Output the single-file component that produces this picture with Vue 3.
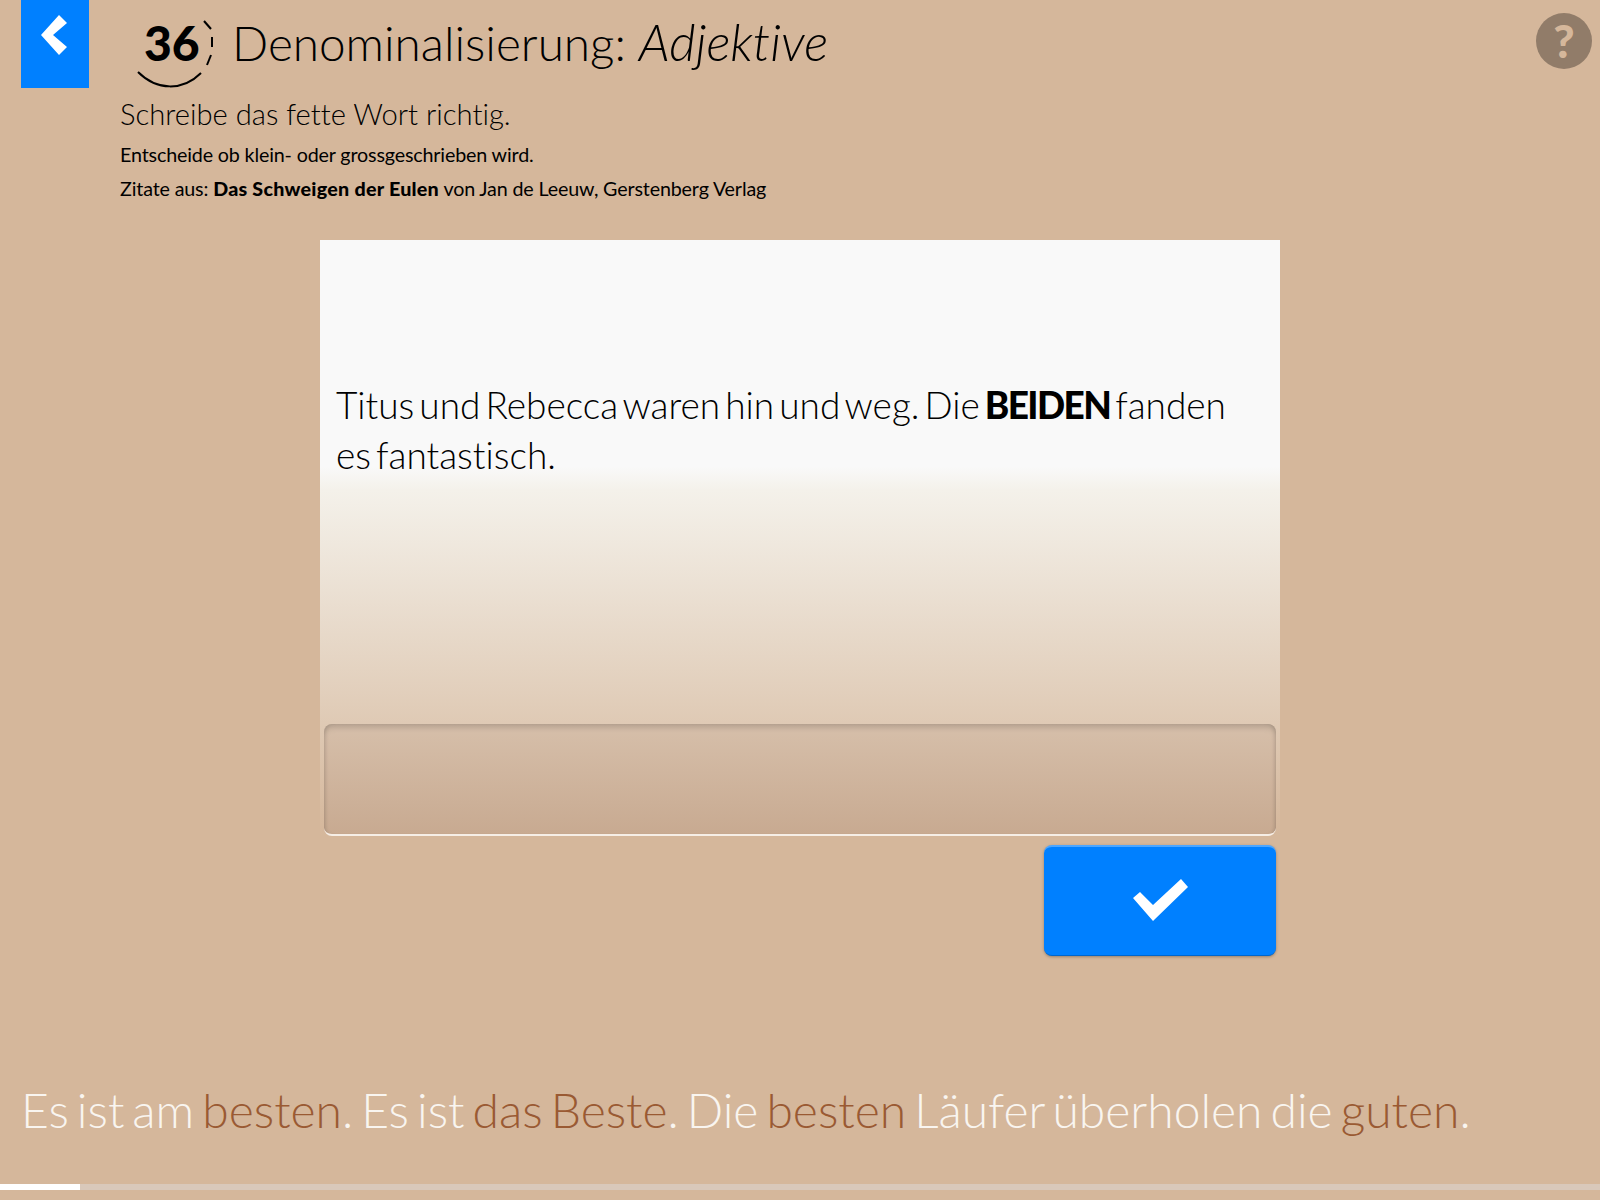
<template>
  <div class="page">
    <header class="top">
      <a class="back">
        <svg width="68" height="88" viewBox="0 0 68 88"><polygon points="38,15 46,23 32,35 46,47 38,55 20,35" fill="#fff"/></svg>
      </a>
      <div class="number">
        <svg class="ring" width="84" height="74" viewBox="0 0 84 74">
          <path d="M67 2 L74 10" fill="none" stroke="#000" stroke-width="2"/>
          <path d="M75 18 L75 28" fill="none" stroke="#000" stroke-width="2"/>
          <path d="M74 36 L70 46" fill="none" stroke="#000" stroke-width="2"/>
          <path d="M1 53 C20 72 46 72 64 54" fill="none" stroke="#000" stroke-width="2"/>
        </svg>
        <span>36</span>
      </div>
      <h1>Denominalisierung: <em>Adjektive</em></h1>
      <div class="help">?</div>
    </header>

    <div class="intro">
      <p class="lead">Schreibe das fette Wort richtig.</p>
      <p class="small">Entscheide ob klein- oder grossgeschrieben wird.</p>
      <p class="small">Zitate aus: <b>Das Schweigen der Eulen</b> von Jan de Leeuw, Gerstenberg Verlag</p>
    </div>

    <main class="exercise">
      <div class="card">
        <p class="sentence">Titus und Rebecca waren hin und weg. Die <b>BEIDEN</b> fanden<br>es fantastisch.</p>
        <div class="answer"></div>
      </div>
      <button class="check">
        <svg width="55" height="42" viewBox="0 0 55 42"><polygon points="0,19 7,13 20,26 48,0 55,8 20,42" fill="#fff"/></svg>
      </button>
    </main>

    <p class="rule">Es ist am <span>besten</span>. Es ist <span>das Beste</span>. Die <span>besten</span> Läufer überholen die <span>guten</span>.</p>

    <div class="progress"><div class="bar" :style="{ width: progress + 'px' }"></div></div>
  </div>
</template>

<script setup>
const progress = 80
</script>

<style>
html, body { margin: 0; background: #d5b79b; }
</style>

<style scoped>
.page {
  width: 1600px;
  height: 1200px;
  display: flex;
  flex-direction: column;
  background: #d5b79b;
  color: #000;
  font-family: Lato, "Noto Sans", sans-serif;
  font-weight: 300;
  font-variant-ligatures: none;
  overflow: hidden;
}

.top {
  display: flex;
  align-items: flex-start;
  height: 88px;
  padding-left: 21px;
  flex-shrink: 0;
}

.back {
  width: 68px;
  height: 88px;
  background: #0080ff;
}
.back svg { display: block; }

.number {
  position: relative;
  width: 96px;
  height: 88px;
  margin-left: 48px;
  flex-shrink: 0;
}
.number span {
  position: absolute;
  left: 7px;
  top: 10px;
  font-size: 48px;
  line-height: 66px;
  font-weight: 900;
}
.ring {
  position: absolute;
  left: 0;
  top: 19px;
}

h1 {
  margin: 9px 0 0 -1px;
  font-size: 47.7px;
  line-height: 66px;
  font-weight: 300;
  flex: 1;
}
h1 em { font-size: 51px; }

.help {
  width: 56px;
  height: 56px;
  margin: 13px 8px 0 0;
  border-radius: 50%;
  background: #917c69;
  color: #d5b79b;
  font-size: 46px;
  line-height: 56px;
  font-weight: 900;
  text-align: center;
}

.intro { padding: 8px 0 0 120px; height: 152px; box-sizing: border-box; }
.intro p { margin: 0; }
.lead { font-size: 29.2px; line-height: 36px; margin-bottom: 6px !important; }
.small { font-size: 19.7px; line-height: 34px; font-weight: 400; letter-spacing: -0.15px; }
.small b { font-weight: 900; letter-spacing: 0.25px; }

.exercise {
  width: 960px;
  margin-left: 320px;
  display: flex;
  flex-direction: column;
  align-items: flex-end;
}

.card {
  width: 960px;
  height: 596px;
  box-sizing: border-box;
  padding: 140px 4px 0;
  display: flex;
  flex-direction: column;
  background: linear-gradient(#f9f9f9 0, #f9f9f9 38%, #f4f1ea 42%, #d5b79b 100%);
}
.sentence {
  margin: 0 12px;
  height: 344px;
  font-size: 37px;
  line-height: 50px;
  word-spacing: -5px;
}
.sentence b { font-weight: 900; letter-spacing: -1.6px; }

.answer {
  height: 112px;
  border-radius: 8px;
  background: linear-gradient(#d6bfaa, #c8aa91);
  box-shadow: inset 0 5px 6px -2px rgba(0,0,0,.18), inset 4px 0 4px -3px rgba(0,0,0,.12), inset -4px 0 4px -3px rgba(0,0,0,.12);
  border-bottom: 2px solid #f6eee6;
  box-sizing: border-box;
}

.check {
  width: 232px;
  height: 111px;
  margin: 9px 4px 0 0;
  border: 0;
  border-top: 2px solid #4da6ff;
  border-bottom: 1px solid #0066cc;
  border-radius: 8px;
  background: #0080ff;
  box-shadow: 0 1px 3px rgba(0,0,0,.3);
  display: flex;
  align-items: center;
  justify-content: center;
  padding: 0 0 2px;
}

.rule {
  margin: 122px 0 0;
  padding-left: 21px;
  font-size: 48px;
  line-height: 64px;
  word-spacing: -5px;
  color: #f9f5f0;
  white-space: nowrap;
}
.rule span { color: #9a5a33; }

.progress {
  margin-top: 42px;
  width: 1600px;
  height: 6px;
  background: #d9c8ba;
  flex-shrink: 0;
}
.bar { height: 6px; background: #fff; }
</style>
